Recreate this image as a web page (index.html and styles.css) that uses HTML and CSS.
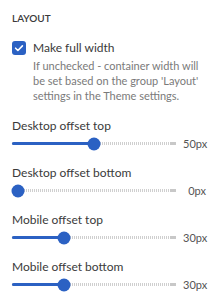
FILE: index.html
```html
<!DOCTYPE html>
<html lang="en">
<head>
  <meta charset="UTF-8">
  <meta name="viewport" content="width=device-width, initial-scale=1.0">
  <title>Layout settings</title>
  <link rel="stylesheet" href="styles.css">
</head>
<body>
  <div class="panel">
    <h3 class="section-title">Layout</h3>

    <label class="check-row">
      <span class="checkbox">
        <svg viewBox="0 0 14 14" width="14" height="14"><path d="M3.6 7.2l2.3 2.3 4.5-4.6" fill="none" stroke="#fff" stroke-width="1.6" stroke-linecap="round" stroke-linejoin="round"/></svg>
      </span>
      <span class="check-text">
        <span class="check-label">Make full width</span>
        <span class="help">If unchecked - container width will be set based on the group 'Layout' settings in the Theme settings.</span>
      </span>
    </label>

    <div class="range-field">
      <div class="range-label">Desktop offset top</div>
      <div class="range-row">
        <div class="range-track">
          <div class="range-inner">
            <div class="range-fill" style="width: 50%"></div>
            <span class="range-thumb" style="left: 50%"></span>
          </div>
        </div>
        <span class="range-value">50px</span>
      </div>
    </div>

    <div class="range-field">
      <div class="range-label">Desktop offset bottom</div>
      <div class="range-row">
        <div class="range-track">
          <div class="range-inner">
            <div class="range-fill" style="width: 0%"></div>
            <span class="range-thumb" style="left: 0%"></span>
          </div>
        </div>
        <span class="range-value">0px</span>
      </div>
    </div>

    <div class="range-field">
      <div class="range-label">Mobile offset top</div>
      <div class="range-row">
        <div class="range-track">
          <div class="range-inner">
            <div class="range-fill" style="width: 30%"></div>
            <span class="range-thumb" style="left: 30%"></span>
          </div>
        </div>
        <span class="range-value">30px</span>
      </div>
    </div>

    <div class="range-field">
      <div class="range-label">Mobile offset bottom</div>
      <div class="range-row">
        <div class="range-track">
          <div class="range-inner">
            <div class="range-fill" style="width: 30%"></div>
            <span class="range-thumb" style="left: 30%"></span>
          </div>
        </div>
        <span class="range-value">30px</span>
      </div>
    </div>
  </div>
</body>
</html>
```

FILE: styles.css
```css
body {
  margin: 0;
  background-color: #fff;
  font-family: Lato, "Open Sans", Arial, sans-serif;
  color: #3c3c3c;
}

.panel {
  padding: 12px 12px 0 12px;
}

.section-title {
  margin: 0 0 16px 0;
  font-size: 10px;
  font-weight: 600;
  line-height: 12px;
  text-transform: uppercase;
  color: #3a3a3a;
}

.check-row {
  display: flex;
  gap: 7px;
  align-items: flex-start;
  cursor: pointer;
}

.checkbox {
  flex: none;
  width: 14px;
  height: 14px;
  margin-top: 1px;
  border-radius: 3px;
  background-color: #2b61c3;
  display: flex;
}

.check-text {
  display: flex;
  flex-direction: column;
}

.check-label {
  font-size: 12px;
  line-height: 16px;
  color: #3a3a3a;
}

.help {
  margin-top: 2px;
  font-size: 11px;
  line-height: 15px;
  color: #7a7a7a;
}

.range-field {
  margin-top: 15px;
}

.range-field + .range-field {
  margin-top: 12px;
}

.range-label {
  font-size: 12px;
  line-height: 16px;
  color: #3a3a3a;
}

.range-row {
  display: flex;
  align-items: center;
  gap: 7px;
  height: 19px;
}

.range-track {
  flex: 1;
  position: relative;
  height: 3px;
  background: repeating-linear-gradient(to right, #cfcfcf 0 1px, transparent 1px 2px);
}

.range-track::after {
  content: "";
  position: absolute;
  right: 0;
  top: 0;
  width: 6px;
  height: 3px;
  background-color: #c8c8c8;
}

.range-inner {
  position: absolute;
  left: 6px;
  right: 6px;
  top: 0;
  bottom: 0;
}

.range-fill {
  position: absolute;
  left: -6px;
  top: 0;
  height: 3px;
  padding-left: 6px;
  background-color: #2b61c3;
  border-radius: 2px;
}

.range-thumb {
  position: absolute;
  top: 50%;
  width: 13px;
  height: 13px;
  border-radius: 50%;
  background-color: #2b61c3;
  transform: translate(-50%, -50%);
  z-index: 1;
}

.range-value {
  flex: none;
  width: 23px;
  text-align: right;
  font-size: 11px;
  color: #555;
}
```
